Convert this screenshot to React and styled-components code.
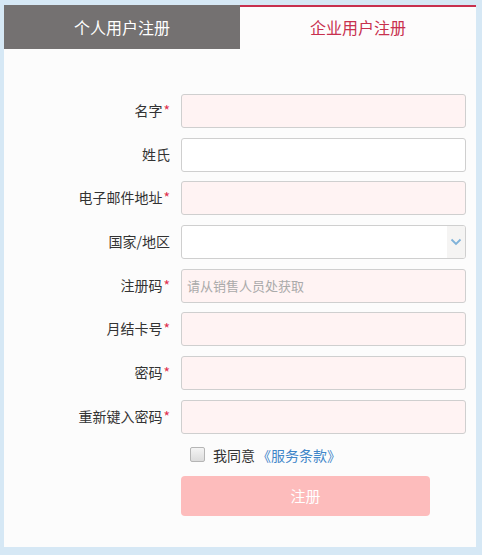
import styled, { createGlobalStyle } from "styled-components";

const GlobalStyle = createGlobalStyle`
  html, body {
    margin: 0;
    padding: 0;
    background: #d6e8f5;
    font-family: "Microsoft YaHei", "Noto Sans CJK SC", "Noto Sans", sans-serif;
  }
  * { box-sizing: border-box; }
`;

const fields = [
  { label: "名字", required: true },
  { label: "姓氏", required: false },
  { label: "电子邮件地址", required: true },
  { label: "国家/地区", required: false, select: true },
  { label: "注册码", required: true, placeholder: "请从销售人员处获取" },
  { label: "月结卡号", required: true },
  { label: "密码", required: true, type: "password" },
  { label: "重新键入密码", required: true, type: "password" },
];

const App = () => {
  return (
    <>
      <GlobalStyle />
      <Page>
        <Card>
          <Tabs>
            <Tab>个人用户注册</Tab>
            <Tab $active>企业用户注册</Tab>
          </Tabs>

          <Panel>
            <Fields>
              {fields.map((f) => (
                <Row key={f.label}>
                  <Label>
                    {f.label}
                    {f.required && <Star>*</Star>}
                  </Label>
                  {f.select ? (
                    <SelectWrap>
                      <Select defaultValue="">
                        <option value=""></option>
                      </Select>
                      <Arrow>
                        <svg width="12" height="8" viewBox="0 0 12 8">
                          <path
                            d="M1.5 1.5 L6 6 L10.5 1.5"
                            fill="none"
                            stroke="#7fb2d9"
                            strokeWidth="1.8"
                          />
                        </svg>
                      </Arrow>
                    </SelectWrap>
                  ) : (
                    <Input
                      type={f.type || "text"}
                      placeholder={f.placeholder}
                      $required={f.required}
                    />
                  )}
                </Row>
              ))}
            </Fields>

            <Agree>
              <Check type="checkbox" />
              <span>我同意</span>
              <Terms>《服务条款》</Terms>
            </Agree>

            <SubmitRow>
              <Submit type="button">注册</Submit>
            </SubmitRow>
          </Panel>
        </Card>
      </Page>
    </>
  );
};

const Page = styled.div`
  padding: 5px 6px 8px 4px;
`;

const Card = styled.div`
  width: 472px;
`;

const Tabs = styled.div`
  display: grid;
  grid-template-columns: 236px 236px;
  height: 44px;
`;

const Tab = styled.div`
  display: flex;
  align-items: center;
  justify-content: center;
  font-size: 16px;
  color: ${(p) => (p.$active ? "#c8304e" : "#ffffff")};
  background: ${(p) => (p.$active ? "#fdfcfc" : "#747171")};
  border-top: 2px solid ${(p) => (p.$active ? "#c8304e" : "#747171")};
  padding-bottom: 3px;
`;

const Panel = styled.div`
  background: #fcfcfc;
  padding: 45px 10px 31px 0;
  height: 498px;
`;

const Fields = styled.div`
  display: flex;
  flex-direction: column;
  gap: 9.7px;
`;

const Row = styled.div`
  display: grid;
  grid-template-columns: 166px 285px;
  column-gap: 11px;
  align-items: center;
  height: 34px;
`;

const Label = styled.label`
  text-align: right;
  font-size: 14px;
  color: #333333;
  white-space: nowrap;
  padding-bottom: 2px;
`;

const Star = styled.span`
  color: #e0304e;
  margin-left: 1px;
`;

const Input = styled.input`
  width: 285px;
  height: 34px;
  border: 1px solid #cfcfcf;
  border-radius: 3px;
  background: ${(p) => (p.$required ? "#fff3f3" : "#ffffff")};
  padding: 0 5px;
  font-family: inherit;
  font-size: 13px;
  color: #333;
  outline: none;

  &::placeholder {
    color: #aaaaaa;
  }
`;

const SelectWrap = styled.div`
  position: relative;
  width: 285px;
  height: 34px;
`;

const Select = styled.select`
  appearance: none;
  width: 100%;
  height: 100%;
  border: 1px solid #cfcfcf;
  border-radius: 3px;
  background: #ffffff;
  font-family: inherit;
  font-size: 13px;
  outline: none;
`;

const Arrow = styled.span`
  position: absolute;
  top: 1px;
  right: 1px;
  bottom: 1px;
  width: 18px;
  display: flex;
  align-items: center;
  justify-content: center;
  background: #f5f4f3;
  border-radius: 0 2px 2px 0;
  pointer-events: none;
`;

const Agree = styled.div`
  display: flex;
  align-items: center;
  height: 22px;
  margin: 10px 0;
  padding-left: 186px;
  font-size: 14px;
  color: #333333;
`;

const Check = styled.input`
  appearance: none;
  width: 15px;
  height: 15px;
  margin: 0 8px 0 0;
  border: 1px solid #b5b5b5;
  border-radius: 2px;
  background: linear-gradient(#f4f4f4, #dcdcdc);
`;

const Terms = styled.a`
  color: #3f86c9;
  margin-left: 2px;
  text-decoration: none;
`;

const SubmitRow = styled.div`
  padding-left: 177px;
`;

const Submit = styled.button`
  width: 249px;
  height: 40px;
  border: none;
  border-radius: 4px;
  background: #fdbcbc;
  color: #ffffff;
  font-family: inherit;
  font-size: 15px;
`;

export default App;
